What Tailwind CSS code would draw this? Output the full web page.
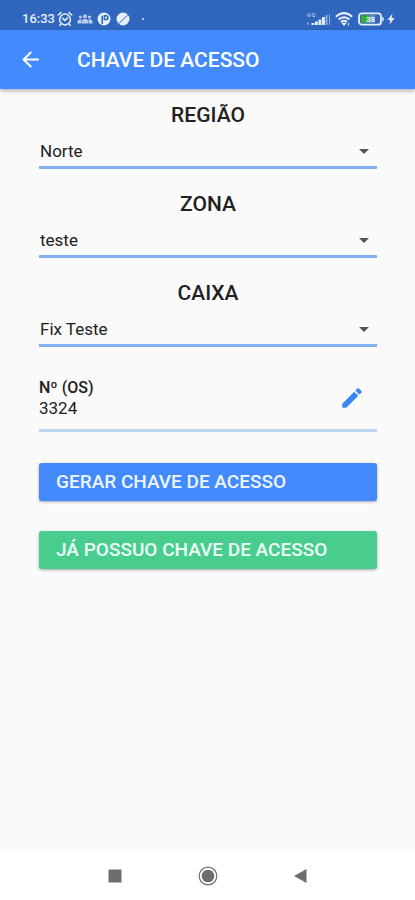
<!DOCTYPE html>
<html lang="pt-BR">
<head>
<meta charset="utf-8">
<meta name="viewport" content="width=device-width, initial-scale=1">
<title>Chave de acesso</title>
<script src="https://cdn.jsdelivr.net/npm/@tailwindcss/browser@4"></script>
</head>
<body class="flex min-h-screen flex-col bg-[#fafafa] font-['Roboto',sans-serif] text-[#212121]">
  <div class="flex h-[30px] shrink-0 items-center justify-between bg-[#3066be] pt-2 pr-5 pl-[22px] text-[#e6effc]">
    <div class="flex items-center gap-1">
      <span class="text-[13px] leading-4 font-medium">16:33</span>
      <svg class="-ml-0.5 size-4" viewBox="0 0 16 16" fill="none" stroke="currentColor" stroke-width="1.5" stroke-linecap="round" aria-hidden="true"><circle cx="8" cy="8.5" r="5.4"/><path d="M1.2 4 4 1.6M14.8 4 12 1.6M5.6 7.4 8 9.4l2.6-2.6M3.8 13.2l-1 1.2M12.2 13.2l1 1.2"/></svg>
      <svg class="h-3 w-4" viewBox="0 0 16 12" fill="currentColor" opacity=".75" aria-hidden="true"><circle cx="3.5" cy="4" r="1.6"/><circle cx="8" cy="3.2" r="2"/><circle cx="12.5" cy="4" r="1.6"/><path d="M.5 10.5V8Q1.500 6 4 6.300L4.500 7.500V10.5ZM5 10.5V7.500Q5.500 5.800 8 5.800t3 1.700v3ZM11.500 10.5v-3l.5-1.200q2.500-.3 3.500 1.700v2.5Z"/></svg>
      <svg class="size-[14px]" viewBox="0 0 14 14" aria-hidden="true"><circle cx="7" cy="7" r="6.5" fill="currentColor"/><path d="M5.200 12V3.700M7.400 3.800H9a1.700 1.700 0 0 1 0 3.800H7.400Z" fill="none" stroke="#3066be" stroke-width="1.5"/></svg>
      <svg class="ml-px size-[14px]" viewBox="0 0 14 14" aria-hidden="true"><circle cx="7" cy="7" r="6.5" fill="currentColor"/><path d="M2.500 11.800 11.800 3" stroke="#3066be" stroke-width="1"/></svg>
      <span class="ml-2 size-[2px] rounded-full bg-current"></span>
    </div>
    <div class="flex items-center gap-1">
      <svg class="h-[14px] w-6" viewBox="0 0 24 14" fill="currentColor" aria-hidden="true"><path d="M2 1 0 4h3M3 1v4M8 1.600Q5 .5 5 3t3 1.500V3.200H6.800" fill="none" stroke="currentColor" stroke-width=".8" opacity=".7"/><path d="M0 10h2v3H0Z" opacity=".35"/><path d="M4.500 11h2.800v2H4.500ZM8 9.500h2.800V13H8ZM11.500 7.500h2.800V13h-2.800ZM15 5h2.800v8H15Z"/><path d="M18.500 3h2v10h-2ZM22 2h1v11h-1Z" opacity=".5"/></svg>
      <svg class="h-[14px] w-[18px]" viewBox="0 0 18 14" fill="none" stroke="currentColor" stroke-width="2" aria-hidden="true"><path d="M.8 4.700Q9-2.500 17.200 4.700M3.500 7.500q5.500-4.600 11 0M6 10q3-2.400 6 0"/><path d="m7 11.200 2 2.300 2-2.300ZM13.500 11v2.500" fill="currentColor" stroke-width="1"/></svg>
      <svg class="ml-px h-[14px] w-[26px]" viewBox="0 0 26 14" aria-hidden="true"><rect x="1" y="1.3" width="22" height="11.4" rx="3" fill="#3066be" stroke="currentColor" stroke-width="1.8"/><path d="M24.300 4.500q1.500 0 1.500 2.500t-1.500 2.500Z" fill="currentColor"/><path d="M3 3.200h8v7.600H3Z" fill="#35ad35"/><path d="M11 3.200h6v7.600h-6Z" fill="#6798bd"/><text x="12.5" y="10" font-size="8" font-weight="700" fill="#e6effc" text-anchor="middle">38</text></svg>
      <svg class="-ml-px h-3 w-2" viewBox="0 0 8 12" fill="currentColor" aria-hidden="true"><path d="M5.500.5.500 7h2.800l-.8 4.500L7.600 5H4.700Z"/></svg>
    </div>
  </div>

  <header class="flex h-[59px] shrink-0 items-center gap-[34px] bg-[#448aff] px-[18px] text-white shadow-[0_2px_4px_rgba(0,0,0,0.3)]">
    <button type="button" aria-label="Voltar" class="flex size-[25px] items-center justify-center">
      <svg class="size-[25px]" viewBox="0 0 24 24" fill="currentColor" aria-hidden="true"><path d="M20 11H7.830l5.590-5.590L12 4l-8 8 8 8 1.410-1.410L7.830 13H20v-2z"/></svg>
    </button>
    <h1 class="text-[21px] leading-7 font-medium">CHAVE DE ACESSO</h1>
  </header>

  <main class="flex-1 pt-3 pr-[38px] pl-[39px]">
    <form class="flex flex-col">
      <div class="flex flex-col gap-[21px]">
        <div class="flex flex-col">
          <label for="regiao" class="text-center text-[21px] leading-7 font-medium">REGIÃO</label>
          <div class="relative">
            <select id="regiao" class="block h-10 w-full appearance-none border-b-3 border-[#82b1f5] bg-transparent pt-1.5 pr-8 pl-px text-[17px] leading-6"><option>Norte</option></select>
            <svg class="pointer-events-none absolute top-5 right-2 h-[5px] w-[10px]" viewBox="0 0 10 5" fill="#555" aria-hidden="true"><path d="M0 0h10L5 5Z"/></svg>
          </div>
        </div>
        <div class="flex flex-col">
          <label for="zona" class="text-center text-[21px] leading-7 font-medium">ZONA</label>
          <div class="relative">
            <select id="zona" class="block h-10 w-full appearance-none border-b-3 border-[#82b1f5] bg-transparent pt-1.5 pr-8 pl-px text-[17px] leading-6"><option>teste</option></select>
            <svg class="pointer-events-none absolute top-5 right-2 h-[5px] w-[10px]" viewBox="0 0 10 5" fill="#555" aria-hidden="true"><path d="M0 0h10L5 5Z"/></svg>
          </div>
        </div>
        <div class="flex flex-col">
          <label for="caixa" class="text-center text-[21px] leading-7 font-medium">CAIXA</label>
          <div class="relative">
            <select id="caixa" class="block h-10 w-full appearance-none border-b-3 border-[#82b1f5] bg-transparent pt-1.5 pr-8 pl-px text-[17px] leading-6"><option>Fix Teste</option></select>
            <svg class="pointer-events-none absolute top-5 right-2 h-[5px] w-[10px]" viewBox="0 0 10 5" fill="#555" aria-hidden="true"><path d="M0 0h10L5 5Z"/></svg>
          </div>
        </div>
      </div>

      <div class="mt-[30px] flex items-center justify-between border-b-3 border-[#bbd6ee] pr-3 pb-[10px]">
        <div>
          <p class="text-[16px] leading-[21px] font-medium">Nº (OS)</p>
          <p class="text-[17px] leading-[21px]">3324</p>
        </div>
        <button type="button" aria-label="Editar número" class="flex size-[26px] items-center justify-center">
          <svg class="size-[26px]" viewBox="0 0 24 24" fill="#3b86f7" aria-hidden="true"><path d="M3 17.250V21h3.750L17.810 9.940l-3.750-3.750L3 17.250zM20.710 7.040a1 1 0 0 0 0-1.410l-2.340-2.340a1 1 0 0 0-1.410 0l-1.830 1.830 3.750 3.750 1.830-1.830z"/></svg>
        </button>
      </div>

      <div class="mt-[31px] flex flex-col gap-[30px]">
        <button type="button" class="h-[38px] w-full rounded-[3px] bg-[#448aff] px-[17px] text-left text-[19px] leading-6 font-medium text-[#eef6ff] shadow-[0_1px_3px_rgba(0,0,0,0.35)]">GERAR CHAVE DE ACESSO</button>
        <button type="button" class="h-[38px] w-full rounded-[3px] bg-[#48cd8f] px-[17px] text-left text-[19px] leading-6 font-medium text-[#eefff7] shadow-[0_1px_3px_rgba(0,0,0,0.35)]">JÁ POSSUO CHAVE DE ACESSO</button>
      </div>
    </form>
  </main>

  <nav aria-label="Sistema" class="flex h-[49px] shrink-0 items-center justify-center gap-[73px] bg-white text-[#6d6d6d]">
    <button type="button" aria-label="Recentes" class="flex size-5 items-center justify-center"><svg class="size-5" viewBox="0 0 20 20" fill="currentColor" aria-hidden="true"><rect x="3.5" y="3.5" width="13" height="13" rx=".5"/></svg></button>
    <button type="button" aria-label="Início" class="flex size-5 items-center justify-center"><svg class="size-5" viewBox="0 0 20 20" aria-hidden="true"><circle cx="10" cy="10" r="8.8" fill="none" stroke="currentColor" stroke-width="1.2"/><circle cx="10" cy="10" r="6.3" fill="currentColor"/></svg></button>
    <button type="button" aria-label="Voltar" class="flex size-5 items-center justify-center"><svg class="size-5" viewBox="0 0 20 20" fill="currentColor" aria-hidden="true"><path d="M3 10 15.500 3v14Z"/></svg></button>
  </nav>
</body>
</html>
